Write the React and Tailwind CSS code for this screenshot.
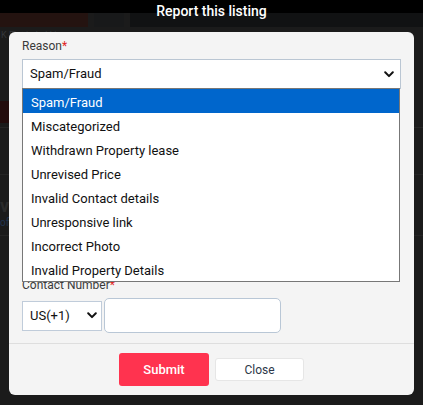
import React from "react";

const Chevron = ({ className }) => (
  <svg viewBox="0 0 10 7" className={className} fill="none">
    <path d="M1.2 1.3 L5 5.1 L8.8 1.3" stroke="#111" strokeWidth="2" strokeLinecap="round" strokeLinejoin="round" />
  </svg>
);

const options = [
  "Spam/Fraud",
  "Miscategorized",
  "Withdrawn Property lease",
  "Unrevised Price",
  "Invalid Contact details",
  "Unresponsive link",
  "Incorrect Photo",
  "Invalid Property Details",
];

export default function App() {
  return (
    <div className="relative w-[423px] h-[405px] overflow-hidden bg-[#1b1b1b] font-['Roboto',sans-serif]">
      {/* dimmed page behind */}
      <div className="flex flex-col">
        <div className="h-[13px] bg-black" />
        <div className="flex h-[14px] gap-[6px]">
          <div className="w-[88px] bg-[#241310]" />
          <div className="w-[30px] bg-[#18191a]" />
          <div className="flex-1 bg-[#111213]" />
        </div>
        <div className="flex h-[18px] items-center pl-[1px] text-[9px] text-[#33363a]">K Flat in Lekki</div>
        <div className="h-[56px]" />
        <div className="h-[22px] w-[60px] bg-[#230c0c]" />
        <div className="mt-[4px] h-px bg-[#262626]" />
        <div className="h-[46px]" />
        <div className="h-px bg-[#242424]" />
        <div className="flex h-[40px] items-end text-[18px] font-bold leading-none text-[#2a2a2a]">v</div>
        <div className="h-[20px] text-[10px] text-[#1f3350]">of</div>
        <div className="h-px bg-[#242424]" />
      </div>

      {/* modal overlay */}
      <div className="absolute inset-0 flex flex-col">
        <div className="flex h-[32px] items-start justify-center pt-[2px] text-[14px] font-medium leading-[18px] text-white">
          Report this listing
        </div>
        <div className="mx-[9px] flex h-[363px] flex-col rounded-[6px] bg-[#f4f4f4]">
          <div className="relative flex flex-col px-[13px] pt-[6px]">
            <div className="text-[12px] leading-[16px] text-[#3a3a3a]">
              Reason<span className="text-[#e02424]">*</span>
            </div>
            <div className="mt-[5px] flex h-[30px] items-center justify-between border border-[#bac6d3] bg-white pl-[7px] pr-[6px] text-[13px] text-[#111]">
              <span>Spam/Fraud</span>
              <Chevron className="w-[10px] h-[7px]" />
            </div>
            <div className="h-[188px]" />
            <div className="text-[12px] leading-[16px] text-[#3a3a3a]">
              Contact Number<span className="text-[#e02424]">*</span>
            </div>
            <div className="mt-[5px] flex items-center gap-[2px]">
              <div className="flex h-[30px] w-[80px] items-center justify-between border border-[#c0ccda] bg-white pl-[7px] pr-[4px] text-[13px] text-[#111]">
                <span>US(+1)</span>
                <Chevron className="w-[10px] h-[7px]" />
              </div>
              <div className="h-[35px] w-[177px] rounded-[5px] border border-[#b9c7d6] bg-white" />
            </div>

            {/* open select list */}
            <div className="absolute left-[13px] right-[14px] top-[56px] flex flex-col border border-[#777] bg-white text-[13px] text-[#111]">
              {options.map((o, i) => (
                <div
                  key={o}
                  className={
                    i === 0
                      ? "flex h-[24px] items-center bg-[#0066cc] pl-[8px] pt-[3px] text-white"
                      : "flex h-[24px] items-center pl-[8px] pt-[3px]"
                  }
                >
                  {o}
                </div>
              ))}
            </div>
          </div>
          <div className="mt-[10px] flex flex-1 items-center justify-center gap-[6px] border-t border-[#dedede]">
            <button className="h-[33px] w-[90px] rounded-[3px] bg-[#ff334f] text-[13px] font-medium text-white">
              Submit
            </button>
            <button className="h-[23px] w-[89px] rounded-[3px] border border-[#e6e6e6] bg-white text-[12px] text-[#2d3748]">
              Close
            </button>
          </div>
        </div>
      </div>
    </div>
  );
}
